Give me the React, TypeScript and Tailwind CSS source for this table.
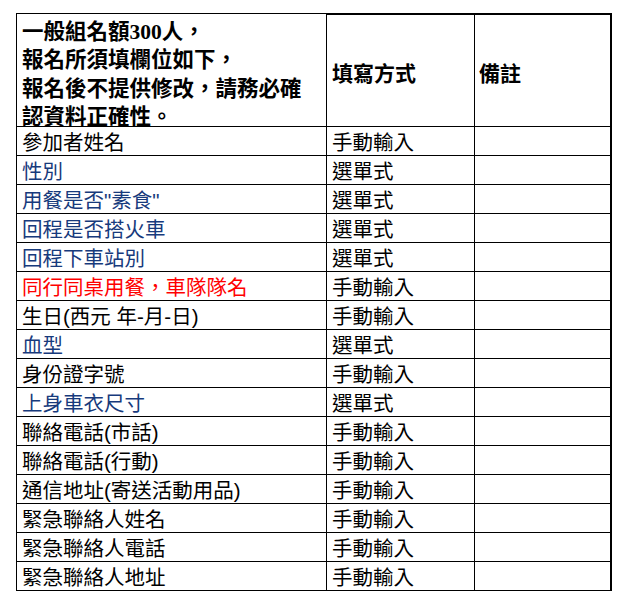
import * as React from "react";

type Row = { label: string; method: string; tone?: "blue" | "red" };

const rows: Row[] = [
  { label: "參加者姓名", method: "手動輸入" },
  { label: "性別", method: "選單式", tone: "blue" },
  { label: "用餐是否\"素食\"", method: "選單式", tone: "blue" },
  { label: "回程是否搭火車", method: "選單式", tone: "blue" },
  { label: "回程下車站別", method: "選單式", tone: "blue" },
  { label: "同行同桌用餐，車隊隊名", method: "手動輸入", tone: "red" },
  { label: "生日(西元 年-月-日)", method: "手動輸入" },
  { label: "血型", method: "選單式", tone: "blue" },
  { label: "身份證字號", method: "手動輸入" },
  { label: "上身車衣尺寸", method: "選單式", tone: "blue" },
  { label: "聯絡電話(市話)", method: "手動輸入" },
  { label: "聯絡電話(行動)", method: "手動輸入" },
  { label: "通信地址(寄送活動用品)", method: "手動輸入" },
  { label: "緊急聯絡人姓名", method: "手動輸入" },
  { label: "緊急聯絡人電話", method: "手動輸入" },
  { label: "緊急聯絡人地址", method: "手動輸入" },
];

const toneClass = {
  blue: "text-[#173a7c]",
  red: "text-[#ff0000]",
};

export default function App() {
  return (
    <div className="min-h-[615px] w-[621px] bg-white pl-4 pt-[13px] text-black">
      <div className="grid w-[596px] grid-cols-[311px_148px_137px] font-['Liberation_Sans','Noto_Sans_CJK_TC',sans-serif]">
        {/* Header */}
        <div className="h-[114px] border-l border-t border-r border-b border-black pl-[5px] pt-[4px] font-['Liberation_Serif','Noto_Sans_CJK_TC',serif] text-[21.5px] font-bold leading-[28.3px]">
          <div>一般組名額300人，</div>
          <div>報名所須填欄位如下，</div>
          <div>報名後不提供修改，請務必確</div>
          <div>認資料正確性。</div>
        </div>
        <div className="flex h-[114px] items-center border-t-2 border-r border-b border-black pl-[5px] pt-[6px] text-[21px] font-bold">
          填寫方式
        </div>
        <div className="flex h-[114px] items-center border-t-2 border-r-2 border-b border-black pl-[4px] pt-[6px] text-[21px] font-bold">
          備註
        </div>

        {/* Body */}
        {rows.map((r) => (
          <React.Fragment key={r.label}>
            <div
              className={`flex h-[29px] items-center overflow-visible whitespace-nowrap border-l border-r border-b border-black pl-[5px] pt-[2px] text-[20.5px] leading-[27px] ${
                r.tone ? toneClass[r.tone] : ""
              }`}
            >
              {r.label}
            </div>
            <div className="flex h-[29px] items-center whitespace-nowrap border-r border-b border-black pl-[5px] pt-[2px] text-[20.5px] leading-[27px]">
              {r.method}
            </div>
            <div className="h-[29px] border-r-2 border-b border-black" />
          </React.Fragment>
        ))}
      </div>
    </div>
  );
}
